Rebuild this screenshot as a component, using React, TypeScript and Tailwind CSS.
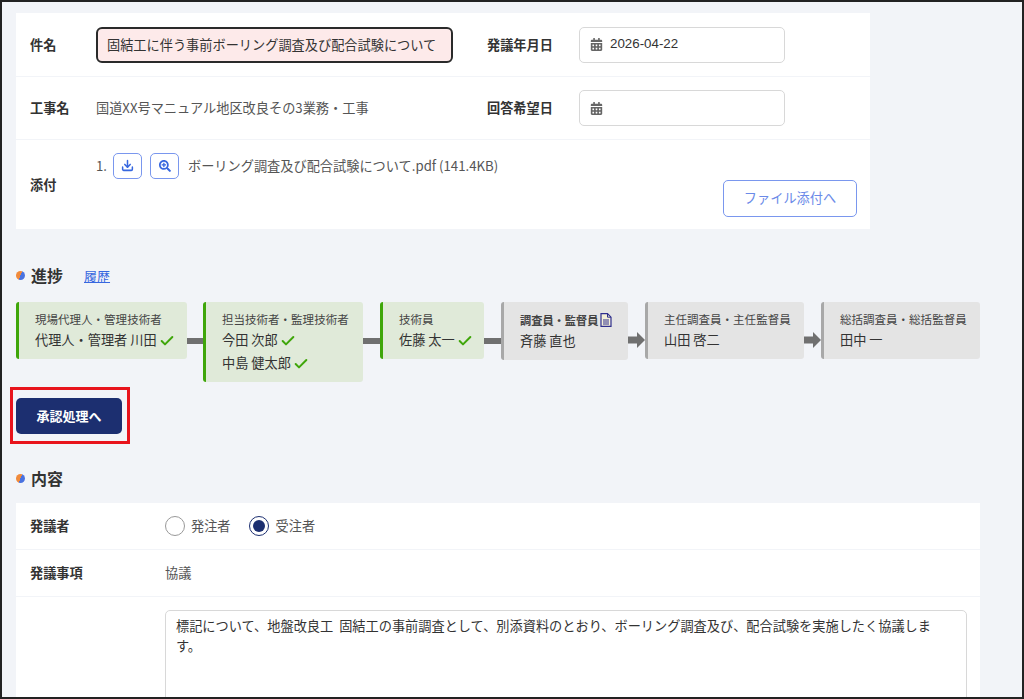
import React from 'react';
import { FaCalendarAlt, FaSearchPlus } from 'react-icons/fa';
import { LuCheck, LuDownload } from 'react-icons/lu';

const Dot = () => (
  <span className="w-[9px] h-[9px] rounded-full bg-[linear-gradient(110deg,#f08a3c_50%,#4a72e0_50%)] shrink-0" />
);

const Check = () => <LuCheck className="inline-block text-[#3fa60a] ml-[2px] text-[16px]" strokeWidth={3} />;

const Bar = ({ width }: { width: string }) => <div className={`${width} h-[6px] mt-[36px] bg-[#707070] shrink-0`} />;

const Arrow = () => (
  <svg className="w-[17px] h-[16px] mt-[30px] shrink-0" viewBox="0 0 17 16">
    <path d="M0 4.5h9V0l8 8-8 8v-4.500H0z" fill="#707070" />
  </svg>
);

const FileIcon = () => (
  <svg className="w-[12px] h-[14px] ml-[2px]" viewBox="0 0 12 14">
    <path d="M1 .7h6.500L11 4.200v9.100H1z" fill="#f4f0d8" stroke="#2f2f8e" strokeWidth="1.200" />
    <path d="M7.500 .7v3.500H11M3 7h6M3 9h6M3 11h6" fill="none" stroke="#2f2f8e" strokeWidth="1" />
  </svg>
);

type StepProps = {
  title: React.ReactNode;
  names: React.ReactNode[];
  done?: boolean;
  width: string;
};

const Step: React.FC<StepProps> = ({ title, names, done, width }) => (
  <div
    className={`${width} shrink-0 rounded-[3px] border-l-[3px] pl-[16px] pt-[8px] pb-[8px] ${
      done ? 'bg-[#e0ead9] border-[#3fa60a]' : 'bg-[#e4e4e4] border-[#a8a8a8]'
    }`}
  >
    <div className="text-[11.52px] leading-[18px] text-[#444] whitespace-nowrap">{title}</div>
    {names.map((n, i) => (
      <div key={i} className="text-[13.2px] leading-[23px] text-[#333] whitespace-nowrap">
        {n}
        {done && <Check />}
      </div>
    ))}
  </div>
);

const DateInput = ({ value }: { value?: string }) => (
  <div className="w-[206px] h-[36px] flex items-center gap-[7px] border border-[#d8d8d8] rounded-[5px] pl-[10px] bg-white">
    <FaCalendarAlt className="text-[#666] text-[13px]" />
    <span className="-mt-px text-[13.33px] text-[#333] font-['Liberation_Sans',sans-serif]">{value}</span>
  </div>
);

const Label = ({ children, className = '' }: { children: React.ReactNode; className?: string }) => (
  <div className={`text-[13.2px] font-bold text-[#333] shrink-0 ${className}`}>{children}</div>
);

const IconButton = ({ children }: { children: React.ReactNode }) => (
  <button className="w-[29px] h-[26px] flex items-center justify-center border border-[#7a97ee] rounded-[5px] text-[#3767df] bg-white">
    {children}
  </button>
);

export default function App() {
  return (
    <div className="relative h-[699px] w-[1024px] overflow-hidden bg-[#f2f4f8] border-2 border-[#222] pl-[14px] pt-[11px] font-['Noto_Sans_CJK_JP','Noto_Sans',sans-serif] text-[#444]">
      <div className="w-[854px] bg-white">
        <div className="h-[64px] flex items-center px-[14px] border-b border-[#f2f4f8]">
          <Label className="w-[66px]">件名</Label>
          <div className="w-[357px] h-[36px] flex items-center pl-[9px] rounded-[6px] border-2 border-[#2a2a2a] bg-[#fdeaea] text-[13.2px] text-[#333] whitespace-nowrap">
            固結工に伴う事前ボーリング調査及び配合試験について
          </div>
          <Label className="w-[92px] ml-[34px]">発議年月日</Label>
          <DateInput value="2026-04-22" />
        </div>
        <div className="h-[63px] flex items-center px-[14px] border-b border-[#f2f4f8]">
          <Label className="w-[66px]">工事名</Label>
          <div className="w-[357px] text-[13.2px] text-[#555] whitespace-nowrap">国道XX号マニュアル地区改良その3業務・工事</div>
          <Label className="w-[92px] ml-[34px]">回答希望日</Label>
          <DateInput />
        </div>
        <div className="h-[89px] flex items-center pl-[14px] pr-[13px]">
          <Label className="w-[66px]">添付</Label>
          <div className="flex-1 flex flex-col">
            <div className="flex items-center gap-[8px] text-[13.2px] text-[#555] whitespace-nowrap">
              <span className="w-[9px] mt-px">1.</span>
              <IconButton>
                <LuDownload className="text-[13px]" strokeWidth={2.8} />
              </IconButton>
              <IconButton>
                <FaSearchPlus className="text-[12px]" />
              </IconButton>
              <span className="ml-px mt-px">ボーリング調査及び配合試験について.pdf (141.4KB)</span>
            </div>
            <button className="self-end mt-px w-[134px] h-[37px] rounded-[5px] border border-[#7a97ee] text-[#6b8ae8] text-[13.2px] bg-white">
              ファイル添付へ
            </button>
          </div>
        </div>
      </div>

      <div className="flex items-center h-[24px] mt-[34px]">
        <Dot />
        <h2 className="ml-[6px] text-[16px] font-bold text-[#333]">進捗</h2>
        <a className="ml-[21px] mt-[2px] text-[13px] text-[#3767df] underline">履歴</a>
      </div>

      <div className="flex items-start mt-[15px]">
        <Step done width="w-[171px]" title="現場代理人・管理技術者" names={['代理人・管理者 川田']} />
        <Bar width="w-[16px]" />
        <Step done width="w-[160px]" title="担当技術者・監理技術者" names={['今田 次郎', '中島 健太郎']} />
        <Bar width="w-[17px]" />
        <Step done width="w-[104px]" title="技術員" names={['佐藤 太一']} />
        <Bar width="w-[17px]" />
        <Step
          width="w-[127px]"
          title={
            <span className="h-[19px] font-bold text-[11.2px] flex items-center">
              調査員・監督員
              <FileIcon />
            </span>
          }
          names={['斉藤 直也']}
        />
        <Arrow />
        <Step width="w-[159px]" title="主任調査員・主任監督員" names={['山田 啓二']} />
        <Arrow />
        <Step width="w-[159px]" title="総括調査員・総括監督員" names={['田中 一']} />
      </div>

      <button className="mt-[16px] block w-[106px] h-[36px] pb-px rounded-[5px] bg-[#1c2f70] text-white text-[13px] font-bold">
        承認処理へ
      </button>

      <div className="flex items-center h-[24px] mt-[32px]">
        <Dot />
        <h2 className="ml-[6px] text-[16px] font-bold text-[#333]">内容</h2>
      </div>

      <div className="w-[964px] mt-[13px] bg-white">
        <div className="h-[47px] flex items-center px-[14px] border-b border-[#f2f4f8]">
          <Label className="w-[135px]">発議者</Label>
          <span className="w-[20px] h-[20px] rounded-full border border-[#999] bg-white" />
          <span className="ml-[6px] text-[13.2px] text-[#555]">発注者</span>
          <span className="ml-[18px] w-[20px] h-[20px] rounded-full border border-[#1c2f70] flex items-center justify-center">
            <span className="w-[12px] h-[12px] rounded-full bg-[#1c2f70]" />
          </span>
          <span className="ml-[7px] text-[13.2px] text-[#555]">受注者</span>
        </div>
        <div className="h-[47px] flex items-center px-[14px] border-b border-[#f2f4f8]">
          <Label className="w-[135px]">発議事項</Label>
          <span className="text-[13.2px] text-[#555]">協議</span>
        </div>
        <div className="pl-[149px] pr-[13px] pt-[13px]">
          <div className="h-[200px] border border-[#d8d8d8] rounded-[5px] px-[10px] py-[5px] text-[13.2px] leading-[20px] text-[#333] [word-spacing:3px]">
            標記について、地盤改良工 固結工の事前調査として、別添資料のとおり、ボーリング調査及び、配合試験を実施したく協議します。
          </div>
        </div>
      </div>

      <div className="absolute left-[8px] top-[385px] w-[120px] h-[57px] border-[3px] border-[#e8141c]" />
    </div>
  );
}
